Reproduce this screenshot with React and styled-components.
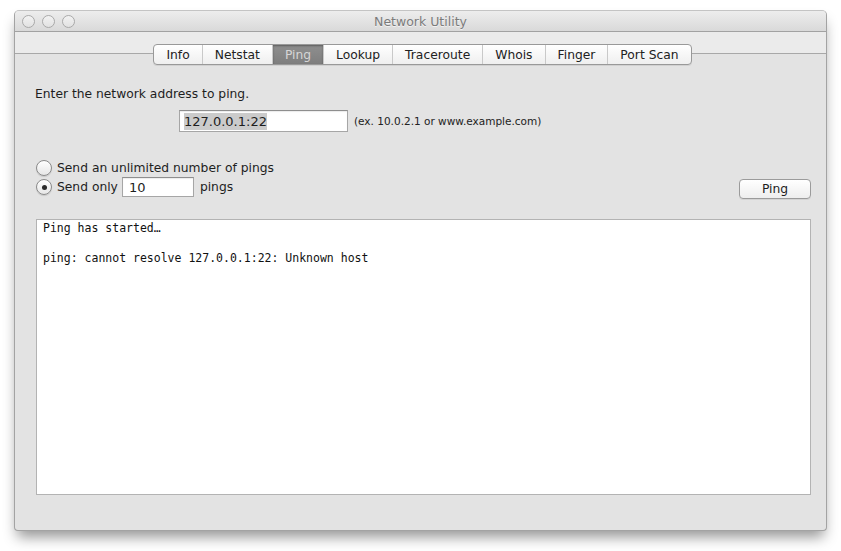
import React, { useState } from 'react';
import styled, { createGlobalStyle } from 'styled-components';

const GlobalStyle = createGlobalStyle`
    html, body {
        margin: 0;
        background: #ffffff;
    }
    body {
        font-family: "DejaVu Sans", "Liberation Sans", sans-serif;
        color: #1e1e1e;
    }
`;

const TABS = ['Info', 'Netstat', 'Ping', 'Lookup', 'Traceroute', 'Whois', 'Finger', 'Port Scan'];

const Page = styled.div`
    padding: 10px 14px 20px;
`;

const Window = styled.div`
    width: 813px;
    height: 521px;
    box-sizing: border-box;
    display: flex;
    flex-direction: column;
    background: #e3e3e3;
    border: 1px solid #a3a3a3;
    border-top-color: #c4c4c4;
    border-radius: 5px 5px 4px 4px;
    box-shadow: 0 9px 14px -3px rgba(0, 0, 0, 0.42);
    overflow: hidden;
`;

const TitleBar = styled.div`
    height: 20px;
    display: grid;
    grid-template-columns: 1fr auto 1fr;
    align-items: center;
    padding: 0 7px;
    background: linear-gradient(#ededed, #d9d9d9);
    border-bottom: 1px solid #a2a2a2;
`;

const Lights = styled.div`
    display: flex;
    gap: 7px;
`;

const Light = styled.span`
    width: 11px;
    height: 11px;
    border-radius: 50%;
    border: 1px solid #a9a9a9;
    background: linear-gradient(#f2f2f2, #e2e2e2);
`;

const Title = styled.div`
    font-size: 12.5px;
    color: #7b7b7b;
    text-shadow: 0 1px 0 rgba(255, 255, 255, 0.6);
`;

const TabBand = styled.div`
    height: 33px;
    box-sizing: border-box;
    padding: 12px 0 0 4px;
    display: flex;
    justify-content: center;
    background: linear-gradient(
        to bottom,
        #ebebeb 0,
        #ebebeb 21px,
        #a8a8a8 21px,
        #a8a8a8 22px,
        #e3e3e3 22px
    );
`;

const TabStrip = styled.div`
    display: flex;
    height: 21px;
    box-sizing: border-box;
    border: 1px solid #999999;
    border-radius: 4px;
    overflow: hidden;
    background: linear-gradient(#ffffff, #efefef);
    box-shadow: 0 1px 0 rgba(0, 0, 0, 0.08);
`;

const Tab = styled.button`
    border: none;
    margin: 0;
    padding: 0 12px;
    font: inherit;
    font-size: 12.3px;
    cursor: pointer;
    color: ${({ $active }) => ($active ? '#d6d6d6' : '#222222')};
    background: ${({ $active }) => ($active ? 'linear-gradient(#8f8f8f, #7e7e7e)' : 'transparent')};
    box-shadow: ${({ $active }) => ($active ? 'inset 0 1px 2px rgba(0,0,0,0.35)' : 'none')};
    border-left: 1px solid #c9c9c9;
    &:first-child {
        border-left: none;
    }
`;

const Content = styled.div`
    flex: 1;
    display: flex;
    flex-direction: column;
    padding: 0 15px 0 20px;
`;

const Prompt = styled.div`
    margin-top: 21px;
    font-size: 12.3px;
    line-height: 16px;
`;

const AddressRow = styled.div`
    display: flex;
    align-items: center;
    margin: 8px 0 0 144px;
`;

const Field = styled.div`
    width: ${({ $w }) => $w}px;
    height: ${({ $h }) => $h}px;
    box-sizing: border-box;
    display: flex;
    align-items: center;
    padding-left: ${({ $pad }) => $pad}px;
    background: #ffffff;
    border: 1px solid #a6a6a6;
    border-top-color: #8e8e8e;
    box-shadow: inset 0 1px 1px rgba(0, 0, 0, 0.08);
    font-size: 13px;
`;

const Selected = styled.span`
    background: #cbcbcb;
    padding: 1px 0;
`;

const Hint = styled.span`
    margin-left: 6px;
    font-size: 10.5px;
    color: #222;
`;

const ControlsRow = styled.div`
    display: flex;
    justify-content: space-between;
    align-items: flex-start;
    margin-top: 26px;
`;

const RadioGroup = styled.div`
    display: flex;
    flex-direction: column;
`;

const RadioRow = styled.label`
    display: flex;
    align-items: center;
    height: ${({ $h }) => $h}px;
    font-size: 12.3px;
    cursor: pointer;
`;

const Radio = styled.span`
    width: 16px;
    height: 16px;
    box-sizing: border-box;
    margin: 0 5px 0 1px;
    border-radius: 50%;
    border: 1px solid #8a8a8a;
    background: linear-gradient(#ffffff, #e6e6e6);
    box-shadow: 0 1px 1px rgba(0, 0, 0, 0.12);
    display: flex;
    align-items: center;
    justify-content: center;

    &::after {
        content: '';
        width: 5px;
        height: 5px;
        border-radius: 50%;
        background: #2a2a2a;
        display: ${({ $on }) => ($on ? 'block' : 'none')};
    }
`;

const Inline = styled.span`
    margin: ${({ $m }) => $m};
`;

const PushButton = styled.button`
    margin-top: 21px;
    width: 72px;
    height: 20px;
    padding: 0;
    border: 1px solid #9b9b9b;
    border-radius: 4px;
    background: linear-gradient(#ffffff, #eeeeee);
    box-shadow: 0 1px 0 rgba(0, 0, 0, 0.07);
    font: inherit;
    font-size: 12.3px;
    color: #1e1e1e;
    cursor: pointer;
`;

const Output = styled.pre`
    flex: 1;
    margin: 20px 0 35px 1px;
    padding: 1px 6px;
    background: #ffffff;
    border: 1px solid #b3b3b3;
    font-family: "DejaVu Sans Mono", "Liberation Mono", monospace;
    font-size: 11.5px;
    line-height: 15px;
    color: #111;
    white-space: pre-wrap;
    overflow: hidden;
`;

const App = () => {
    const [tab, setTab] = useState('Ping');
    const [unlimited, setUnlimited] = useState(false);

    return (
        <Page>
            <GlobalStyle />
            <Window>
                <TitleBar>
                    <Lights>
                        <Light />
                        <Light />
                        <Light />
                    </Lights>
                    <Title>Network Utility</Title>
                    <span />
                </TitleBar>

                <TabBand>
                    <TabStrip>
                        {TABS.map((name) => (
                            <Tab key={name} $active={tab === name} onClick={() => setTab(name)}>
                                {name}
                            </Tab>
                        ))}
                    </TabStrip>
                </TabBand>

                <Content>
                    <Prompt>Enter the network address to ping.</Prompt>
                    <AddressRow>
                        <Field $w={169} $h={22} $pad={4}>
                            <Selected>127.0.0.1:22</Selected>
                        </Field>
                        <Hint>(ex. 10.0.2.1 or www.example.com)</Hint>
                    </AddressRow>

                    <ControlsRow>
                        <RadioGroup>
                            <RadioRow $h={19} onClick={() => setUnlimited(true)}>
                                <Radio $on={unlimited} />
                                Send an unlimited number of pings
                            </RadioRow>
                            <RadioRow $h={20} onClick={() => setUnlimited(false)}>
                                <Radio $on={!unlimited} />
                                Send only
                                <Inline $m="0 0 0 4px">
                                    <Field $w={72} $h={20} $pad={6}>10</Field>
                                </Inline>
                                <Inline $m="0 0 0 6px">pings</Inline>
                            </RadioRow>
                        </RadioGroup>
                        <PushButton>Ping</PushButton>
                    </ControlsRow>

                    <Output>{'Ping has started…\n\nping: cannot resolve 127.0.0.1:22: Unknown host'}</Output>
                </Content>
            </Window>
        </Page>
    );
};

export default App;
